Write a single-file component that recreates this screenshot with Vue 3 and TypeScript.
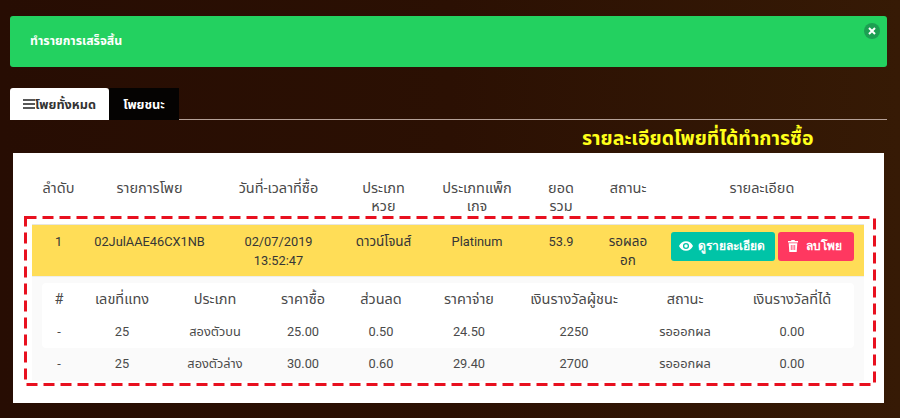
<script setup lang="ts">
interface SubRow { no: string; type: string; buy: string; disc: string; pay: string; prize: string; status: string; won: string }
const subRows: SubRow[] = [
  { no: '25', type: 'สองตัวบน', buy: '25.00', disc: '0.50', pay: '24.50', prize: '2250', status: 'รอออกผล', won: '0.00' },
  { no: '25', type: 'สองตัวล่าง', buy: '30.00', disc: '0.60', pay: '29.40', prize: '2700', status: 'รอออกผล', won: '0.00' },
]
const mainHeads = ['ลำดับ', 'รายการโพย', 'วันที่-เวลาที่ซื้อ', 'ประเภท หวย', 'ประเภทแพ็ก เกจ', 'ยอด รวม', 'สถานะ', 'รายละเอียด']
const subHeads = ['#', 'เลขที่แทง', 'ประเภท', 'ราคาซื้อ', 'ส่วนลด', 'ราคาจ่าย', 'เงินรางวัลผู้ชนะ', 'สถานะ', 'เงินรางวัลที่ได้']
</script>

<template>
  <div class="page">
    <div class="alert">
      <span>ทำรายการเสร็จสิ้น</span>
      <span class="close">
        <svg width="8" height="8" viewBox="0 0 8 8"><path d="M1 1l6 6M7 1L1 7" stroke="#fff" stroke-width="2" /></svg>
      </span>
    </div>

    <div class="tabs">
      <div class="tab active">
        <svg width="12" height="10" viewBox="0 0 12 10"><path d="M0 1h12M0 5h12M0 9h12" stroke="#222" stroke-width="1.6" /></svg>
        <span>โพยทั้งหมด</span>
      </div>
      <div class="tab dark">โพยชนะ</div>
    </div>

    <h2 class="title">รายละเอียดโพยที่ได้ทำการซื้อ</h2>

    <div class="card">
      <table class="main">
        <colgroup>
          <col style="width:53px" /><col style="width:129px" /><col style="width:129px" /><col style="width:81px" />
          <col style="width:106px" /><col style="width:62px" /><col style="width:72px" /><col style="width:200px" />
        </colgroup>
        <thead>
          <tr><th v-for="h in mainHeads" :key="h">{{ h }}</th></tr>
        </thead>
        <tbody>
          <tr class="yellow">
            <td>1</td>
            <td>02JulAAE46CX1NB</td>
            <td>02/07/2019<br />13:52:47</td>
            <td class="thai">ดาวน์โจนส์</td>
            <td>Platinum</td>
            <td>53.9</td>
            <td class="thai">รอผลอ<br />อก</td>
            <td class="actions">
              <button class="btn teal">
                <svg width="14" height="10" viewBox="0 0 16 11"><path fill="#fff" fill-rule="evenodd" d="M8 0C4.500 0 1.600 2 0 5.500 1.600 9 4.500 11 8 11s6.400-2 8-5.500C14.400 2 11.500 0 8 0zm0 2a3.500 3.500 0 1 1 0 7 3.500 3.500 0 0 1 0-7zm0 1.500a2 2 0 1 0 0 4 2 2 0 0 0 0-4z" /></svg>
                ดูรายละเอียด
              </button>
              <button class="btn pink">
                <svg width="10" height="12" viewBox="0 0 10 12"><path fill="#fff" d="M3.500 0h3l.5 1h3v1.500H0V1h3zM.7 3.300h8.600L8.700 12H1.300z" /><path d="M3.300 5v5M5 5v5M6.700 5v5" stroke="#ff3860" stroke-width=".8" /></svg>
                ลบโพย
              </button>
            </td>
          </tr>
        </tbody>
      </table>

      <div class="detail">
        <table class="sub">
          <colgroup>
            <col style="width:34px" /><col style="width:92px" /><col style="width:94px" /><col style="width:82px" /><col style="width:74px" />
            <col style="width:102px" /><col style="width:108px" /><col style="width:114px" /><col style="width:112px" />
          </colgroup>
          <thead>
            <tr><th v-for="h in subHeads" :key="h">{{ h }}</th></tr>
          </thead>
          <tbody>
            <tr v-for="(r, i) in subRows" :key="i">
              <td>-</td><td>{{ r.no }}</td><td>{{ r.type }}</td><td>{{ r.buy }}</td><td>{{ r.disc }}</td>
              <td>{{ r.pay }}</td><td>{{ r.prize }}</td><td>{{ r.status }}</td><td>{{ r.won }}</td>
            </tr>
          </tbody>
        </table>
      </div>

      <svg class="dash" width="852" height="170" viewBox="0 0 852 170">
        <rect x="1.500" y="1.500" width="849" height="167" fill="none" stroke="#e8101f" stroke-width="3" stroke-dasharray="11 6" />
      </svg>
    </div>
  </div>
</template>

<style>
html, body { margin: 0; background: #2b1003; }
</style>

<style scoped>
.page {
  width: 900px;
  height: 418px;
  box-sizing: border-box;
  padding: 16px 13px 0 10px;
  overflow: hidden;
  background: linear-gradient(90deg, #270d03 0%, #2b1003 50%, #361a05 100%);
  font-family: Roboto, "Noto Sans", "Noto Sans Thai", sans-serif;
  font-size: 12.8px;
  line-height: 19px;
  color: #3c3c3c;
}
.alert {
  position: relative;
  height: 51px;
  box-sizing: border-box;
  padding: 16px 20px;
  background: #23d160;
  border-radius: 3px;
  color: #fff;
  font-weight: 700;
  font-size: 12.3px;
}
.close {
  position: absolute;
  top: 7px;
  right: 7px;
  width: 16px;
  height: 16px;
  border-radius: 50%;
  background: #1c9f52;
  display: flex;
  align-items: center;
  justify-content: center;
}
.tabs {
  display: flex;
  align-items: flex-end;
  margin-top: 20px;
  height: 32px;
  border-bottom: 1px solid #b5a198;
}
.tab {
  height: 32px;
  margin-bottom: -1px;
  box-sizing: border-box;
  display: flex;
  align-items: center;
  font-weight: 700;
  font-size: 12.700px;
}
.tab.active {
  width: 99px;
  justify-content: center;
  background: #fff;
  color: #333;
  border-radius: 3px 3px 0 0;
}
.tab.dark {
  width: 70px;
  justify-content: center;
  background: #050302;
  color: #fff;
}
.title {
  margin: 8px 0 0;
  height: 24px;
  padding-left: 572px;
  font-size: 19.500px;
  line-height: 21px;
  font-weight: 700;
  color: #ffff1a;
  white-space: nowrap;
}
.card {
  position: relative;
  width: 871px;
  height: 250px;
  margin: 1px 0 0 3px;
  background: #fff;
  box-sizing: border-box;
  padding: 24px 20px 0 19px;
}
table {
  border-collapse: collapse;
  table-layout: fixed;
  text-align: center;
}
th { font-weight: 400; font-size: 14.500px; vertical-align: top; padding: 0 6px; }
.main { width: 832px; }
.main thead th { height: 47px; color: #4a4a4a; padding: 3px 14px 0; box-sizing: border-box; line-height: 18px; }
.main thead th:first-child { padding: 3px 0 0; }
.main thead th:last-child { padding-right: 18px; }
.yellow { background: #ffdd57; color: #363636; }
.yellow td {
  height: 52px;
  box-sizing: border-box;
  vertical-align: top;
  padding: 7px 6px 0;
  border-top: 1px solid #e6e6e0;
  border-bottom: 1px solid #eeeeea;
}
.yellow td.thai { font-size: 13.500px; }
.yellow td.actions { padding: 7px 10px 0 0; text-align: right; }
.actions { white-space: nowrap; }
.btn {
  height: 29px;
  border: 0;
  border-radius: 3px;
  color: #fff;
  font: 700 12px/29px Roboto, "Noto Sans", sans-serif;
  padding: 0;
  display: inline-flex;
  align-items: center;
  justify-content: center;
  gap: 5px;
  vertical-align: top;
}
.teal { width: 104px; padding-right: 2px; box-sizing: border-box; background: #00c4a7; margin-right: 3px; }
.pink { width: 76px; padding-right: 2px; box-sizing: border-box; background: #ff3860; gap: 8px; }
.detail {
  width: 832px;
  height: 104px;
  box-sizing: border-box;
  padding: 6px 10px 0;
  background: #fafafa;
}
.sub { width: 812px; }
.sub thead th { height: 33px; padding-top: 7px; box-sizing: border-box; color: #4a4a4a; background: #fff; }
.sub thead th:first-child { border-top-left-radius: 4px; }
.sub thead th:last-child { padding-right: 18px; border-top-right-radius: 4px; }
.sub td { height: 32px; box-sizing: border-box; padding: 6px 4px 0; vertical-align: top; color: #4a4a4a; }
.sub td:last-child { padding-right: 16px; }
.sub tbody tr:first-child td { background: #fff; }
.sub tbody tr:first-child td:first-child { border-bottom-left-radius: 4px; }
.sub tbody tr:first-child td:last-child { border-bottom-right-radius: 4px; }
.dash {
  position: absolute;
  left: 11px;
  top: 63px;
  pointer-events: none;
}
</style>
